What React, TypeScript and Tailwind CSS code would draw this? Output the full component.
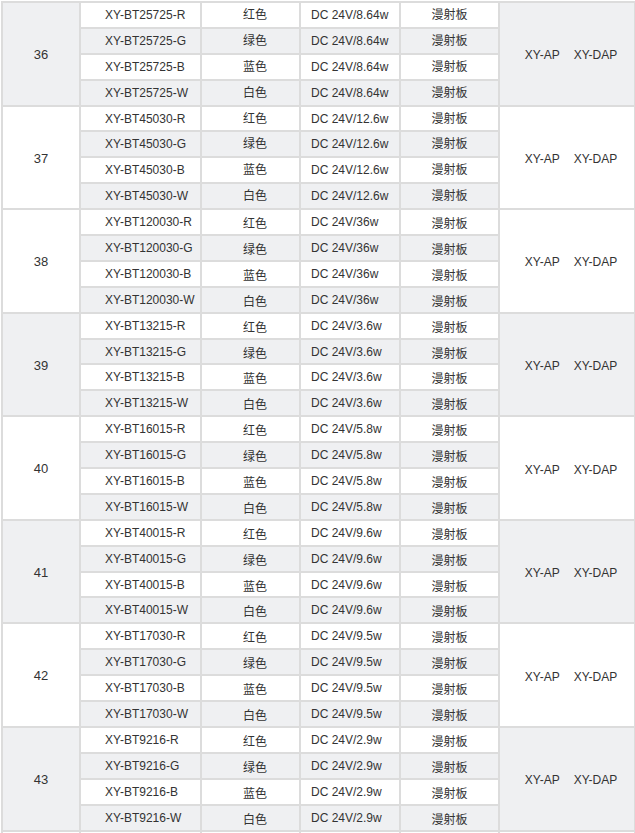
import React from 'react'

interface Group {
  no: number
  code: string
  power: string
  shade: boolean
}

const groups: Group[] = [
  { no: 36, code: '25725', power: '8.64w', shade: true },
  { no: 37, code: '45030', power: '12.6w', shade: false },
  { no: 38, code: '120030', power: '36w', shade: false },
  { no: 39, code: '13215', power: '3.6w', shade: true },
  { no: 40, code: '16015', power: '5.8w', shade: false },
  { no: 41, code: '40015', power: '9.6w', shade: true },
  { no: 42, code: '17030', power: '9.5w', shade: false },
  { no: 43, code: '9216', power: '2.9w', shade: true },
]

const variants = [
  { suffix: 'R', color: '红色' },
  { suffix: 'G', color: '绿色' },
  { suffix: 'B', color: '蓝色' },
  { suffix: 'W', color: '白色' },
]

const cell = 'border-2 border-[#dcdcdc] p-0 align-middle'

export default function App() {
  return (
    <div className="bg-white pl-[1px] pt-[1px] font-['Liberation_Sans','Noto_Sans_CJK_SC',sans-serif] text-[12px] text-[#333]">
      <table className="w-[633px] table-fixed border-collapse">
        <colgroup>
          <col className="w-[78px]" />
          <col className="w-[121px]" />
          <col className="w-[99px]" />
          <col className="w-[100px]" />
          <col className="w-[99px]" />
          <col className="w-[136px]" />
        </colgroup>
        <tbody>
          {groups.map((g, gi) =>
            variants.map((v, i) => {
              const rowBg = i % 2 === 1 ? 'bg-[#eff0f2]' : 'bg-white'
              const cjkPad = gi >= 2 ? 'pt-[4px]' : ''
              return (
                <tr key={`${g.no}-${v.suffix}`} className={`h-[25.9px] ${rowBg}`}>
                  {i === 0 && (
                    <td
                      rowSpan={4}
                      className={`${cell} pt-[2px] text-center text-[13px] ${g.shade ? 'bg-[#eff0f2]' : 'bg-white'}`}
                    >
                      {g.no}
                    </td>
                  )}
                  <td className={`${cell} pl-[24px] whitespace-nowrap`}>
                    XY-BT{g.code}-{v.suffix}
                  </td>
                  <td className={`${cell} ${cjkPad} pl-[9px] text-center`}>{v.color}</td>
                  <td className={`${cell} pl-[10px] whitespace-nowrap`}>DC 24V/{g.power}</td>
                  <td className={`${cell} ${cjkPad} text-center`}>漫射板</td>
                  {i === 0 && (
                    <td
                      rowSpan={4}
                      className={`${cell} pt-[3px] pl-[8px] text-center whitespace-nowrap ${g.shade ? 'bg-[#eff0f2]' : 'bg-white'}`}
                    >
                      <span>XY-AP</span>
                      <span className="ml-[14px]">XY-DAP</span>
                    </td>
                  )}
                </tr>
              )
            })
          )}
          {/* next group starts just under the fold */}
          <tr className="h-[25.9px] bg-white">
            <td className={cell}></td>
            <td className={cell}></td>
            <td className={cell}></td>
            <td className={cell}></td>
            <td className={cell}></td>
            <td className={cell}></td>
          </tr>
        </tbody>
      </table>
    </div>
  )
}
